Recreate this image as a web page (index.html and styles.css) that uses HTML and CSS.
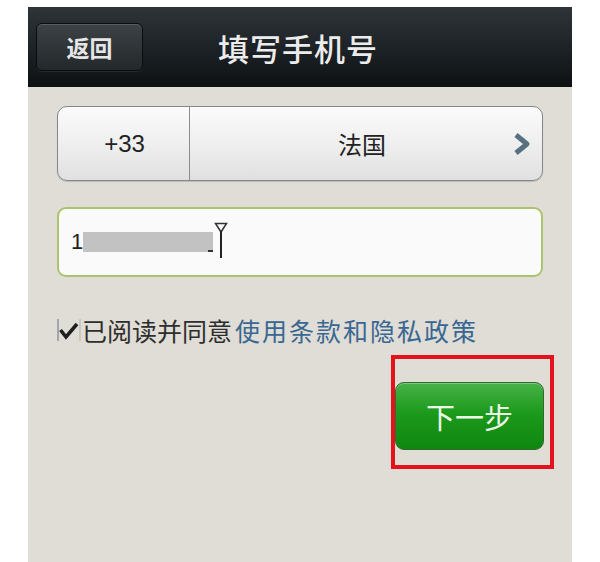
FILE: index.html
```html
<!DOCTYPE html>
<html lang="zh-CN">
<head>
  <meta charset="UTF-8" />
  <meta name="viewport" content="width=device-width, initial-scale=1.0" />
  <title>填写手机号</title>
  <link rel="stylesheet" href="styles.css">
</head>
<body>
  <div class="screen">
    <div class="topbar">
      <button class="back-btn">返回</button>
      <h1 class="title">填写手机号</h1>
    </div>

    <div class="content">
      <!-- country picker -->
      <div class="country">
        <div class="country-code">+33</div>
        <div class="country-name">法国</div>
        <svg class="chevron" width="20" height="24" viewBox="0 0 20 24">
          <path d="M4 3 L15 12 L4 21" fill="none" stroke="#587080" stroke-width="5" stroke-linejoin="round" />
        </svg>
      </div>

      <div class="phone-input">
        <span class="digit">1</span>
        <span class="masked"></span>
        <span class="dash"></span>
        <svg class="caret" width="14" height="36" viewBox="0 0 14 36">
          <path d="M1.5 1.5 L12.5 1.5 L7 10 Z" fill="none" stroke="#333" stroke-width="1.5" />
          <line x1="7" y1="9" x2="7" y2="36" stroke="#222" stroke-width="2" />
        </svg>
      </div>

      <div class="agree">
        <svg class="check" width="24" height="26" viewBox="0 0 24 26">
          <line x1="1" y1="2" x2="1" y2="24" stroke="#8f959c" stroke-width="1.5" />
          <path d="M3.5 13 L9 20 L20 7" fill="none" stroke="#1e1e1e" stroke-width="3.5" />
          <line x1="23" y1="2" x2="23" y2="24" stroke="#b0b4b8" stroke-width="1" />
        </svg>
        <span class="agree-text">已阅读并同意</span><a class="agree-link">使用条款和隐私政策</a>
      </div>

      <div class="actions">
        <div class="highlight">
          <button class="next-btn">下一步</button>
        </div>
      </div>
    </div>
  </div>
</body>
</html>
```

FILE: styles.css
```css
body {
  margin: 0;
  padding-top: 7px;
  background: #fff;
  font-family: "Noto Sans CJK SC", "Liberation Sans", sans-serif;
}
.screen {
  width: 544px;
  margin-left: 28px;
  min-height: 555px;
  background: #dfddd5;
}
/* Top bar */
.topbar {
  height: 80px;
  display: flex;
  align-items: center;
  padding-left: 8px;
  background: linear-gradient(#2e3438, #1c2125 55%, #0d1113);
}
.back-btn {
  width: 107px;
  height: 48px;
  border: 1px solid #0a0c0d;
  border-radius: 6px;
  background: linear-gradient(#3c4245, #23282b);
  box-shadow: inset 0 1px 0 rgba(255,255,255,0.15), 0 1px 0 rgba(255,255,255,0.08);
  color: #e6e6e6;
  font-family: "Noto Sans CJK SC", sans-serif;
  font-size: 23px;
  font-weight: bold;
  padding: 0;
}
.title {
  margin: 0 0 0 75px;
  color: #ececec;
  font-size: 31px;
  font-weight: 500;
  letter-spacing: 1px;
}
.content {
  padding: 19px 29px 0 29px;
}
/* Country picker */
.country {
  height: 73px;
  display: flex;
  align-items: center;
  border: 1px solid #85888a;
  border-radius: 10px;
  background: linear-gradient(#fbfbfb, #efefef 50%, #e0e0e0);
  box-shadow: 0 1px 1px rgba(0,0,0,0.15);
}
.country-code {
  width: 129px;
  height: 100%;
  display: flex;
  align-items: center;
  justify-content: center;
  border-right: 1px solid #8c8c8c;
  font-family: "Liberation Sans", Arial, sans-serif;
  font-size: 24px;
  color: #222;
  padding-left: 2px;
}
.country-name {
  flex: 1;
  text-align: center;
  font-size: 24px;
  color: #222;
  padding-left: 22px;
}
.chevron { margin-right: 10px; }
/* Phone input */
.phone-input {
  margin-top: 26px;
  height: 66px;
  display: flex;
  align-items: center;
  border: 2px solid #a9c46c;
  border-radius: 9px;
  background: #fafafa;
  padding-left: 12px;
}
.digit {
  font-family: "Liberation Sans", Arial, sans-serif;
  font-size: 22px;
  color: #222;
}
.masked {
  width: 130px;
  height: 20px;
  background: #c2c2c2;
}
.dash {
  width: 5px;
  height: 2px;
  background: #333;
  margin: 18px 0 0 -5px;
}
.caret { margin-left: 1px; margin-top: -5px; }
/* Agree line */
.agree {
  margin-top: 38px;
  height: 30px;
  display: flex;
  align-items: center;
  font-size: 25px;
}
.check { margin-right: 1px; }
.agree-text { color: #2e2e2e; }
.agree-link {
  color: #3a6792;
  letter-spacing: 2px;
  margin-left: 3px;
}
/* Next button */
.actions {
  display: flex;
  justify-content: flex-end;
  margin-top: 10px;
  margin-right: -11px;
}
.highlight {
  border: 4px solid #e4121c;
  padding: 23px 6px 15px 0;
}
.next-btn {
  width: 149px;
  height: 68px;
  border: 1px solid #2f6a2f;
  border-radius: 9px;
  background: linear-gradient(#48b248, #1c9a1c 45%, #0f870f);
  box-shadow: inset 0 1px 0 rgba(255,255,255,0.3);
  color: #eaf6e6;
  font-family: "Noto Sans CJK SC", sans-serif;
  font-size: 29px;
  padding: 0;
}
```
